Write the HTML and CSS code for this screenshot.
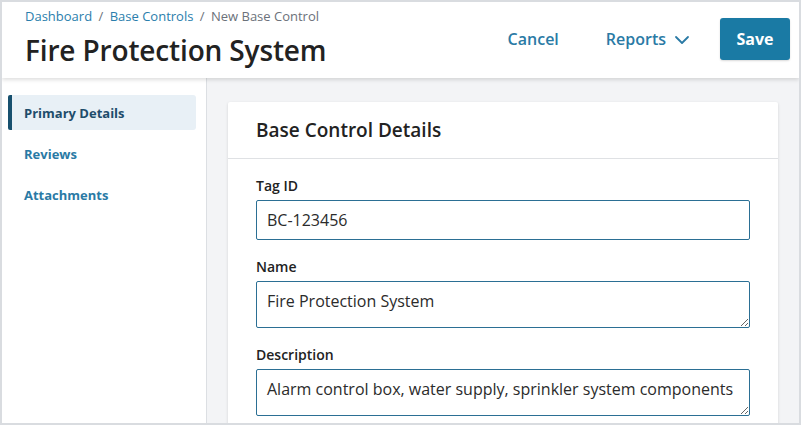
FILE: index.html
```html
<!DOCTYPE html>
<html lang="en">
<head>
  <meta charset="UTF-8" />
  <title>Fire Protection System</title>
  <meta name="viewport" content="width=device-width, initial-scale=1.0" />
  <link rel="stylesheet" href="styles.css">
</head>
<body>
  <div class="frame">
    <header class="topbar">
      <div class="topbar-left">
        <nav class="breadcrumb">
          <a href="#">Dashboard</a>
          <span class="sep">/</span>
          <a href="#">Base Controls</a>
          <span class="sep">/</span>
          <span class="current">New Base Control</span>
        </nav>
        <h1>Fire Protection System</h1>
      </div>
      <div class="actions">
        <a href="#" class="link-btn">Cancel</a>
        <a href="#" class="link-btn reports">Reports
          <svg width="16" height="10" viewBox="0 0 16 10" fill="none" stroke="currentColor" stroke-width="1.8" stroke-linecap="round" stroke-linejoin="round"><path d="M2 2l6 6 6-6"/></svg>
        </a>
        <button class="save-btn">Save</button>
      </div>
    </header>

    <div class="layout">
      <aside class="sidebar">
        <a href="#" class="side-item active">Primary Details</a>
        <a href="#" class="side-item">Reviews</a>
        <a href="#" class="side-item">Attachments</a>
      </aside>

      <main class="main">
        <section class="card">
          <div class="card-header">
            <h2>Base Control Details</h2>
          </div>
          <div class="card-body">
            <label class="field-label" for="tag">Tag ID</label>
            <input id="tag" class="field-input" type="text" value="BC-123456">

            <label class="field-label" for="name">Name</label>
            <textarea id="name" class="field-area">Fire Protection System</textarea>

            <label class="field-label" for="desc">Description</label>
            <textarea id="desc" class="field-area">Alarm control box, water supply, sprinkler system components</textarea>
          </div>
        </section>
      </main>
    </div>
  </div>
</body>
</html>
```

FILE: styles.css
```css
* {
  box-sizing: border-box;
}

body {
  margin: 0;
  font-family: 'Open Sans', 'Noto Sans', sans-serif;
  color: #222;
}

a {
  text-decoration: none;
}

.frame {
  width: 801px;
  height: 425px;
  border: 2px solid #d9dce0;
  overflow: hidden;
  display: flex;
  flex-direction: column;
}

/* header */
.topbar {
  height: 76px;
  flex-shrink: 0;
  display: flex;
  justify-content: space-between;
  padding: 5px 9px 0 23px;
  background: #fff;
  box-shadow: 0 2px 4px rgba(0, 0, 0, 0.13);
  position: relative;
  z-index: 1;
}

.breadcrumb {
  font-size: 13px;
  line-height: 18px;
  color: #6b717a;
}

.breadcrumb a {
  color: #2a7eac;
}

.breadcrumb .sep {
  margin: 0 3px;
  color: #6b717a;
}

h1 {
  margin: 7px 0 0;
  font-size: 28px;
  line-height: 36px;
  font-weight: 600;
  letter-spacing: -0.15px;
  color: #222;
}

.actions {
  display: flex;
  align-items: center;
  padding-bottom: 7px;
}

.link-btn {
  font-size: 16px;
  font-weight: 600;
  color: #2a7aa5;
  display: flex;
  align-items: center;
  gap: 8px;
}

.link-btn.reports {
  margin-left: 47px;
}

.link-btn svg {
  margin-top: 1px;
}

.save-btn {
  margin-left: 30px;
  width: 70px;
  height: 42px;
  border: none;
  border-radius: 3px;
  background: #1a7aa4;
  color: #fff;
  font-family: inherit;
  font-size: 16px;
  font-weight: 700;
  box-shadow: 0 1px 2px rgba(0, 0, 0, 0.15);
}

/* body */
.layout {
  flex: 1;
  display: flex;
  min-height: 0;
}

.sidebar {
  width: 205px;
  flex-shrink: 0;
  background: #fff;
  border-right: 1px solid #dcdfe3;
  padding: 17px 10px 0 6px;
  display: flex;
  flex-direction: column;
  gap: 6px;
}

.side-item {
  height: 35px;
  display: flex;
  align-items: center;
  padding-left: 12px;
  border-left: 4px solid transparent;
  border-radius: 3px;
  font-size: 13px;
  font-weight: 700;
  color: #2a7aa5;
}

.side-item.active {
  background: #e8f0f6;
  border-left-color: #17506e;
  border-radius: 2px 3px 3px 2px;
  color: #1e4d6b;
}

.main {
  flex: 1;
  background: #f3f4f6;
  padding: 24px 21px 0 21px;
}

.card {
  background: #fff;
  border-radius: 2px;
  box-shadow: 0 1px 3px rgba(0, 0, 0, 0.14);
}

.card-header {
  height: 57px;
  padding-left: 28px;
  display: flex;
  align-items: center;
  border-bottom: 1px solid #dfe1e4;
}

h2 {
  margin: 0 0 1px;
  font-size: 19px;
  font-weight: 600;
  color: #222;
}

.card-body {
  padding: 17px 28px 20px;
  display: flex;
  flex-direction: column;
}

.field-label {
  font-size: 14px;
  line-height: 20px;
  font-weight: 600;
  color: #222;
  margin-bottom: 4px;
}

.field-input,
.field-area {
  width: 100%;
  border: 1px solid #2b6f94;
  border-radius: 2px;
  font-family: inherit;
  font-size: 16px;
  color: #2b2b2b;
  padding: 0 10px;
  margin-bottom: 17px;
  outline: none;
}

.field-input {
  height: 40px;
}

.field-area {
  height: 47px;
  padding-top: 8px;
  line-height: 22px;
  resize: vertical;
}
```
